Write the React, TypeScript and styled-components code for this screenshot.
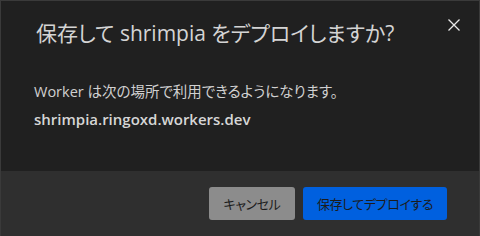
import React from "react";
import styled, { createGlobalStyle } from "styled-components";

const GlobalStyle = createGlobalStyle`
  html, body {
    margin: 0;
    padding: 0;
    background: #202020;
  }
  body {
    font-family: "Open Sans", "Noto Sans CJK JP", sans-serif;
    font-feature-settings: "palt";
  }
`;

const Dialog = styled.div`
  width: 480px;
  height: 236px;
  box-sizing: border-box;
  border: 1px solid #3a3a3a;
  border-bottom: none;
  display: flex;
  flex-direction: column;
  background: #202020;
  color: #d2d2d2;
`;

const Body = styled.div`
  flex: 1;
  padding: 17px 18px 0 33px;
  display: flex;
  flex-direction: column;
`;

const Header = styled.div`
  display: flex;
  align-items: flex-start;
  justify-content: space-between;
`;

const Title = styled.h2`
  margin: 0;
  font-size: 21px;
  font-weight: 400;
  line-height: 30px;
  color: #d4d4d4;
  padding-left: 2px;
`;

const CloseButton = styled.button`
  background: none;
  border: none;
  padding: 0;
  width: 14px;
  height: 14px;
  display: flex;
  color: #e8e8e8;
  cursor: pointer;
`;

const Message = styled.p`
  margin: 34px 0 0;
  font-size: 14.5px;
  line-height: 20px;
  color: #d0d0d0;
`;

const Url = styled.p`
  margin: 7px 0 0;
  font-size: 15px;
  font-weight: 600;
  line-height: 20px;
  color: #d6d6d6;
`;

const Footer = styled.div`
  height: 65px;
  background: #2f2f2f;
  display: flex;
  align-items: flex-start;
  justify-content: flex-end;
  gap: 8px;
  padding: 16px 32px 0 0;
  box-sizing: border-box;
`;

const Button = styled.button<{ $primary?: boolean }>`
  height: 33px;
  width: ${(p) => (p.$primary ? 144 : 86)}px;
  border: none;
  border-radius: 3px;
  padding: 0;
  font-family: "Noto Sans CJK JP", sans-serif;
  font-feature-settings: "palt";
  font-size: 13px;
  letter-spacing: -0.4px;
  color: #1c1c1c;
  background: ${(p) => (p.$primary ? "#0060df" : "#8c8c8c")};
  cursor: pointer;
`;

export default function App() {
  return (
    <>
      <GlobalStyle />
      <Dialog>
        <Body>
          <Header>
            <Title>保存して shrimpia をデプロイしますか?</Title>
            <CloseButton aria-label="閉じる">
              <svg width="14" height="14" viewBox="0 0 14 14">
                <path d="M1.5 1.5L12.5 12.5M12.5 1.5L1.5 12.5" stroke="currentColor" strokeWidth="1.3" />
              </svg>
            </CloseButton>
          </Header>
          <Message>Worker は次の場所で利用できるようになります。</Message>
          <Url>shrimpia.ringoxd.workers.dev</Url>
        </Body>
        <Footer>
          <Button>キャンセル</Button>
          <Button $primary>保存してデプロイする</Button>
        </Footer>
      </Dialog>
    </>
  );
}
